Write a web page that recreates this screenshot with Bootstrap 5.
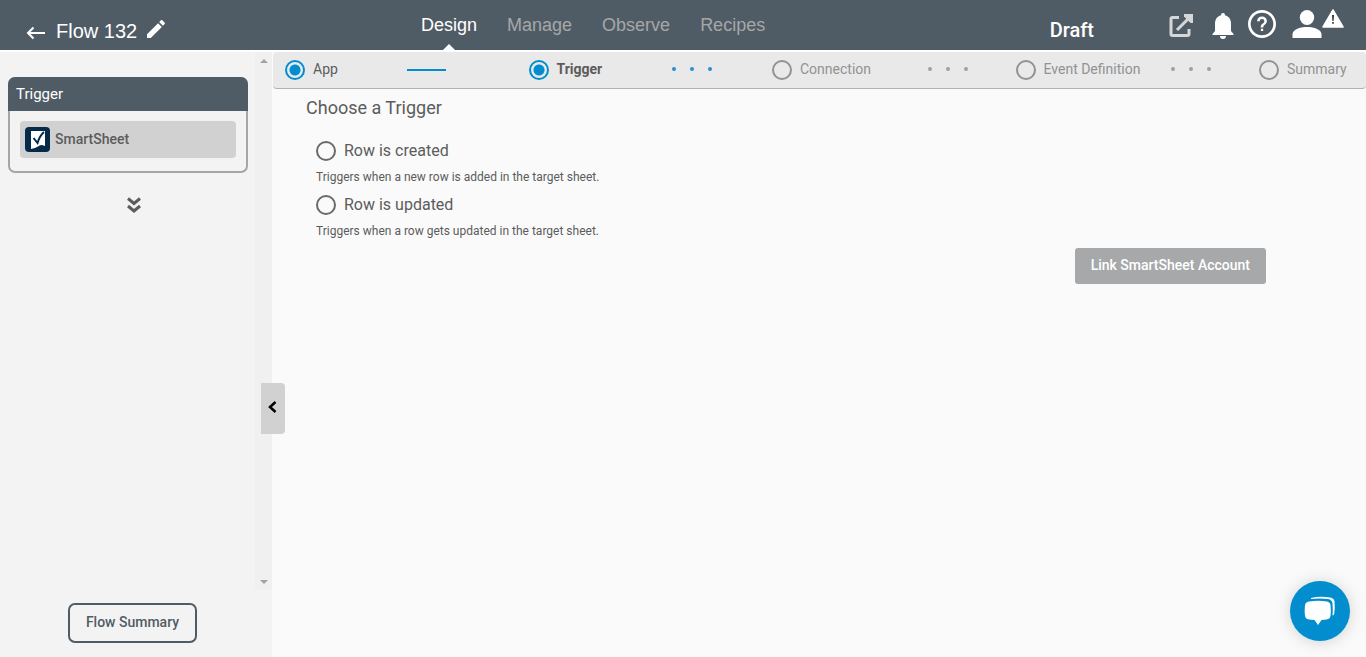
<!DOCTYPE html>
<html lang="en">
<head>
<meta charset="utf-8">
<meta name="viewport" content="width=device-width, initial-scale=1">
<title>Flow 132</title>
<link rel="stylesheet" href="https://cdn.jsdelivr.net/npm/bootstrap@5.3.0/dist/css/bootstrap.min.css">
<style>
  body { font-family: Roboto, sans-serif; font-size: 14px; line-height: 20px; color: #5c5c5c; background: #fafafa; }
  svg { display: block; flex: none; }
  .topbar { height: 52px; background: #505c65; border-bottom: 2px solid #fff; color: #fff; }
  .flow-title { width: 421px; padding: 12px 0 0 26px; font: 20px/24px "Liberation Sans", sans-serif; }
  .flow-title h1 { font: inherit; margin: 0 0 0 10px; }
  .plain-btn { border: 0; background: none; padding: 0; color: inherit; }
  .main-tabs { gap: 30px; font: 18px/50px "Liberation Sans", sans-serif; }
  .main-tabs a { color: #a5a7a9; text-decoration: none; position: relative; }
  .main-tabs a.active { color: #fff; }
  .main-tabs a.active::after { content: ""; position: absolute; left: 50%; bottom: 0; margin-left: -6px; border: 6px solid transparent; border-top: 0; border-bottom-color: #fff; }
  .draft-label { font-size: 20px; font-weight: 500; line-height: 24px; margin: 5px 73px 0 0; padding-top: 4px; }
  .top-icons { padding: 2px 22px 0 0; }
  .help-btn { margin: 0 16px 0 13px; }
  .sidebar { width: 272px; background: #f3f3f3; }
  .flow-list { padding: 25px 7px 0 8px; }
  .trigger-box { border: 2px solid #a6a6a6; border-top: 0; border-radius: 7px; }
  .trigger-box h2 { margin: 0 -2px; padding: 7px 8px; font-size: 15px; font-weight: 400; line-height: 20px; background: #505c65; color: #fff; border-radius: 7px 7px 0 0; }
  .app-item { margin: 10px 10px 13px; height: 37px; padding: 0 5px; gap: 5px; background: #d1d1d1; border-radius: 4px; font-weight: 500; width: calc(100% - 20px); }
  .app-item span { padding-bottom: 2px; }
  .scroll-track { width: 17px; background: #f0f0f0; padding: 7px 0 6px; }
  .side-foot { height: 67px; padding: 13px 7px 0 0; }
  .summary-btn { height: 40px; padding: 0 16px 2px; border: 2px solid #505c65; border-radius: 7px; background: transparent; color: #505c65; font-weight: 500; }
  .collapse-btn { position: absolute; left: 261px; top: 331px; width: 24px; height: 51px; padding: 0 2px 3px 0; border: 0; background: #d1d1d1; border-radius: 0 4px 4px 0; z-index: 2; }
  .stepper { height: 37px; margin-left: 1px; padding-left: 12px; background: #e9e9e9; border-bottom: 1px solid #b1b1b1; border-radius: 4px; }
  .step-cell { flex: 1 1 0; color: #929292; }
  .step-cell:last-child { flex: 0 0 107px; }
  .step-cell label { padding: 0 0 2px 8px; white-space: nowrap; }
  .step-cell.done { color: #5c5c5c; }
  .ring { appearance: none; flex: none; width: 20px; height: 20px; margin: 0; border: 2px solid #6a6a6a; border-radius: 50%; background: transparent; }
  .step-cell .ring { border-color: #929292; }
  .step-cell .ring:checked { border-color: #028ece; background: radial-gradient(circle, #028ece 5px, transparent 6px); }
  .solid-link { width: 39px; height: 2px; margin-right: 83px; background: #028ece; }
  .dots-link { width: 40px; margin: 0 48px 2px 0; color: #a0a0a0; }
  .dots-link i { width: 4px; height: 4px; border-radius: 50%; background: currentColor; }
  .dots-blue { color: #2590d0; margin-right: 60px; }
  .trigger-form { padding: 7px 100px 0 34px; }
  .trigger-form h3 { font-size: 18px; font-weight: 400; line-height: 24px; margin: 0 0 20px; }
  .trigger-option { padding-left: 10px; margin-bottom: 9px; }
  .trigger-option label { font-size: 16px; line-height: 20px; padding: 1px 0 0 8px; }
  .trigger-option p { font-size: 12px; line-height: 16px; margin: 8px 0 0; }
  .link-btn { height: 36px; padding: 0 16px 2px; border: 0; border-radius: 3px; background: #a6a8aa; color: #fff; font-weight: 500; }
  .chat-btn { position: fixed; right: 16px; bottom: 16px; width: 60px; height: 60px; border: 0; padding: 0; border-radius: 50%; background: #028ece; box-shadow: 0 1px 16px rgba(0,0,0,.16); }
</style>
</head>
<body>
<div class="d-flex flex-column min-vh-100">
  <header class="topbar d-flex">
    <div class="flow-title d-flex align-items-center">
      <button class="plain-btn pt-1" aria-label="Back"><svg width="20" height="14" viewBox="0 0 20 14" fill="none" stroke="#fff" stroke-width="2"><path d="M19 7H2M7.500 1.500 2 7l5.500 5.500"/></svg></button>
      <h1>Flow 132</h1>
      <button class="plain-btn ms-1 ps-1 pb-1" aria-label="Rename"><svg width="24" height="24" viewBox="1 0 24 24" fill="#fff"><path d="M3 17.250V21h3.750L17.810 9.940l-3.750-3.750zM20.710 7.040a1 1 0 0 0 0-1.410l-2.340-2.340a1 1 0 0 0-1.410 0l-1.830 1.830 3.750 3.750z"/></svg></button>
    </div>
    <nav class="main-tabs d-flex">
      <a class="active" href="#">Design</a><a href="#">Manage</a><a href="#">Observe</a><a href="#">Recipes</a>
    </nav>
    <div class="ms-auto d-flex align-items-center">
      <span class="draft-label">Draft</span>
      <div class="top-icons d-flex align-items-center">
        <button class="plain-btn me-3" aria-label="Open"><svg width="28" height="28" viewBox="0 0 28 28" fill="none" stroke="#d6d6d6" stroke-width="3"><path d="M12 5.500H5.500a1.500 1.500 0 0 0-1.500 1.500v15a1.500 1.500 0 0 0 1.500 1.500h15a1.500 1.500 0 0 0 1.500-1.500V17"/><path d="M10 18 22 6"/><path fill="#d6d6d6" stroke="none" d="M17 2h9v9h-2.500l-6.500-6.500z"/></svg></button>
        <button class="plain-btn" aria-label="Notifications"><svg width="24" height="30" viewBox="0 0 24 30" fill="#fff"><path d="M12 2a2 2 0 0 0-2 2.200C6 5.400 4 8.500 4 12.500V20l-2.500 3v1h21v-1L20 20v-7.500c0-4-2-7.100-6-8.300A2 2 0 0 0 12 2zM9 25a3 3 0 0 0 6 0z"/></svg></button>
        <button class="plain-btn help-btn pb-1" aria-label="Help"><svg width="28" height="28" viewBox="0 0 24 24" fill="#fff"><path d="M11 18h2v-2h-2zm1-18C5.400 0 0 5.400 0 12s5.400 12 12 12 12-5.400 12-12S18.600 0 12 0zm0 21.700a9.700 9.700 0 1 1 0-19.400 9.700 9.700 0 0 1 0 19.400zM12 5.500a4.200 4.200 0 0 0-4.200 4.200H10a2 2 0 1 1 4 0c0 2-3.100 2-3.100 5.200h2.200c0-2.300 3.100-2.600 3.100-5.200A4.200 4.200 0 0 0 12 5.500z"/></svg></button>
        <button class="plain-btn d-flex align-items-start pb-1" aria-label="Account"><svg width="30" height="30" viewBox="0 0 30 30" fill="#fff"><ellipse cx="15" cy="8.500" rx="7.200" ry="7.500"/><path d="M.500 29v-3.500c0-5 7-7.500 14.500-7.500s14.500 2.500 14.500 7.500V29z"/></svg><svg width="22" height="20" viewBox="0 0 22 20"><path d="M11 1 21 18H1z" fill="#fff" stroke="#fff" stroke-width="1.500" stroke-linejoin="round"/><path d="M10 6h2l-.400 6h-1.200zM10.200 13h1.600v1.800h-1.600z" fill="#333"/></svg></button>
      </div>
    </div>
  </header>

  <div class="d-flex flex-grow-1 position-relative">
    <aside class="sidebar d-flex flex-column flex-shrink-0">
      <div class="d-flex flex-grow-1">
        <div class="flow-list flex-grow-1">
          <section class="trigger-box">
            <h2>Trigger</h2>
            <button class="plain-btn app-item d-flex align-items-center">
              <svg width="25" height="25" viewBox="0 0 25 25"><rect width="25" height="25" rx="4" fill="#052b48"/><path d="M6 4h14v15l-3-1c-3 0-4 2-7 3l-4 1z" fill="#fff"/><path d="m8.500 11 4 5C14 11 16 7.500 19 5" fill="none" stroke="#052b48" stroke-width="2"/></svg>
              <span>SmartSheet</span>
            </button>
          </section>
          <div class="d-flex justify-content-center ps-3 pt-4"><svg class="me-1" width="14" height="17" viewBox="0 0 14 17" fill="none" stroke="#5c5c5c" stroke-width="3"><path d="m1 1.500 6 5 6-5M1 9 7 14l6-5"/></svg></div>
        </div>
        <div class="scroll-track d-flex flex-column justify-content-between align-items-center">
          <svg width="8" height="4" fill="#a3a3a3"><path d="M0 4 4 0l4 4z"/></svg>
          <svg width="8" height="4" fill="#a3a3a3"><path d="m0 0 4 4 4-4z"/></svg>
        </div>
      </div>
      <div class="side-foot text-center"><button class="summary-btn">Flow Summary</button></div>
    </aside>
    <button class="collapse-btn d-flex align-items-center justify-content-center" aria-label="Collapse panel"><svg width="9" height="12" viewBox="0 0 9 12" fill="none" stroke="#000" stroke-width="2.500"><path d="M7.500 1 2 6l5.500 5"/></svg></button>

    <main class="flex-grow-1">
      <div class="stepper d-flex align-items-center">
        <div class="step-cell done d-flex align-items-center"><input class="ring" type="radio" id="s1" name="s1" checked><label for="s1">App</label><span class="solid-link ms-auto"></span></div>
        <div class="step-cell done d-flex align-items-center"><input class="ring" type="radio" id="s2" name="s2" checked><label for="s2" class="fw-bold">Trigger</label><span class="dots-link dots-blue ms-auto d-flex justify-content-between"><i></i><i></i><i></i></span></div>
        <div class="step-cell d-flex align-items-center"><input class="ring" type="radio" id="s3" name="s3"><label for="s3">Connection</label><span class="dots-link ms-auto d-flex justify-content-between"><i></i><i></i><i></i></span></div>
        <div class="step-cell d-flex align-items-center"><input class="ring" type="radio" id="s4" name="s4"><label for="s4">Event Definition</label><span class="dots-link ms-auto d-flex justify-content-between"><i></i><i></i><i></i></span></div>
        <div class="step-cell d-flex align-items-center"><input class="ring" type="radio" id="s5" name="s5"><label for="s5">Summary</label></div>
      </div>
      <form class="trigger-form">
        <h3>Choose a Trigger</h3>
        <div class="trigger-option">
          <div class="d-flex align-items-center"><input class="ring" type="radio" name="trigger" id="created"><label for="created">Row is created</label></div>
          <p>Triggers when a new row is added in the target sheet.</p>
        </div>
        <div class="trigger-option">
          <div class="d-flex align-items-center"><input class="ring" type="radio" name="trigger" id="updated"><label for="updated">Row is updated</label></div>
          <p>Triggers when a row gets updated in the target sheet.</p>
        </div>
        <div class="text-end"><button type="button" class="link-btn">Link SmartSheet Account</button></div>
      </form>
    </main>
  </div>
</div>
<button class="chat-btn d-flex align-items-center justify-content-center" aria-label="Chat"><svg width="32" height="32" viewBox="0 0 32 32" fill="#fff"><path d="M5 6.500Q14 5 23 6.500q3 .500 3.500 3.500 .700 6 0 11-.500 3-4 3.500l-5 .500-3.500 5-3.500-5-5.500-.500Q1.500 24 1 21q-.700-5 0-11 .500-3 4-3.500z"/><path d="M7 3q9-2 19-.500 4 .500 4.500 4 .700 6-.300 12-.300 2-1.700 2 .500-6 0-12-.500-4-4.500-4.500-9-1-17 0z"/></svg></button>
<script src="https://cdn.jsdelivr.net/npm/bootstrap@5.3.0/dist/js/bootstrap.bundle.min.js"></script>
</body>
</html>
